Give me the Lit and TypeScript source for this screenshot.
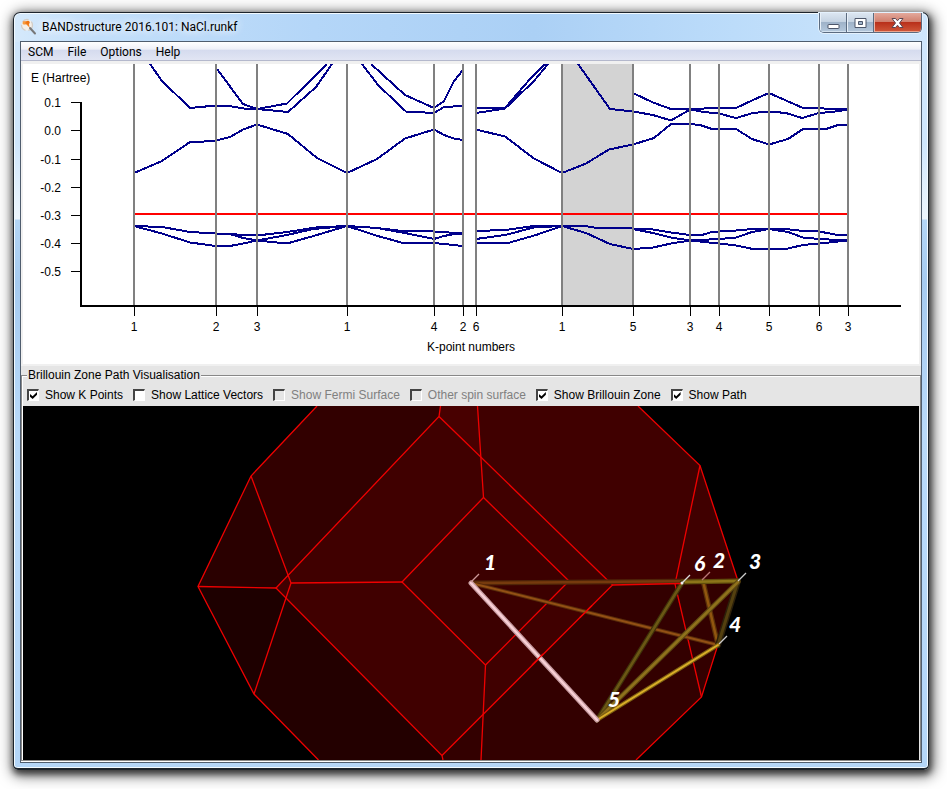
import { LitElement, html, svg, css } from "lit";
import { customElement, property, state } from "lit/decorators.js";

const K_LINES: Array<[number, string]> = [
  [134, "1"], [216, "2"], [257, "3"], [347, "1"], [434, "4"], [463, "2"], [476, "6"],
  [562, "1"], [633, "5"], [690, "3"], [719, "4"], [769, "5"], [819, "6"], [848, "3"],
];

const ENERGIES: Array<[number, string]> = [
  [102, "0.1"], [130, "0.0"], [159, "-0.1"], [187, "-0.2"], [215, "-0.3"], [243, "-0.4"], [271, "-0.5"],
];

const BANDS: string[] = [
  // conduction, first part of the path
  "150,64 162,81 190,108 216,105.5 229,106 244,108.5 257,109 287,103.5 327,64",
  "217,69 243,104 257,109 288,112 316,87 332,64",
  "362,64 378,85 406,111.5 434,113 444,107 463,106",
  "371,64 405,95 434,108 444,101 454,81 463,70",
  "134,173 162,161 190,142 204,141.5 216,140.5 230,137 243,129.5 257,124.5 288,134 317,158 347,173 377,159 405,138.5 434,129.5 444,135 454,138.5 463,140",
  // valence, first part
  "134,226 162,227 190,232 216,233.5 257,235.5 287,232 316,227.5 347,226 377,228 402,231 434,231.5 463,233.5",
  "216,233.5 230,234 243,238 257,240.5 287,235 313,229 347,226 377,228 405,233 434,239 444,236 454,234 463,233.5",
  "134,226 162,233.5 190,242.5 216,246 230,246 243,243.5 257,240.5 287,243.5 317,235 347,226 376,235.5 403,243 434,243 463,246",
  // conduction, second part
  "476,108 505,108 530,79 545,64",
  "476,113 505,108.5 534,81 548,64",
  "476,129.5 505,136.5 534,158.5 562,173 586,163.5 609,149.5 633,144.5 654,138 671,124 690,124 700,125 712,129 736,129 752,139 769,144.5 788,139 803,129 826,129 838,125 848,125",
  "578,64 610,109 633,111.5 653,115 671,120.5 690,109.5 704,112 719,113.5 736,118 753,113 769,111.5 786,113 802,118 819,113 832,112 848,109.5",
  "633,93 653,102.5 671,109 697,109 712,108 736,108 753,100 769,93 786,100.5 803,108 819,108 829,109 848,109.5",
  // valence, second part
  "476,231 505,230 534,226 562,226 585,226 597,228 633,228.5 650,229 671,232.5 690,235 702,235 712,232 736,230.5 753,229 786,229 803,231 819,231.5 838,235 848,235",
  "476,239 505,235 534,227.5 562,226",
  "633,229 653,233 671,237.5 690,240.5 719,239 736,237.5 752,232 769,229 788,232 803,237.5 819,239 848,240.5",
  "476,243 508,243 536,235 562,226 586,233 610,244 633,249 653,247.5 671,243.5 690,240.5 719,243.5 736,245.5 753,249 786,249 803,245 819,243.5 848,240.5",
];

@customElement("band-chart")
class BandChart extends LitElement {
  static styles = css`
    :host { display: block; background: #fff; }
    svg { display: block; width: 100%; height: auto; }
    text { font: 12px "Liberation Sans", Arial, sans-serif; fill: #000; }
    .end { text-anchor: end; }
    .mid { text-anchor: middle; }
    .band { fill: none; stroke: #00008b; stroke-width: 2; shape-rendering: crispEdges; }
    .crisp { shape-rendering: crispEdges; }
  `;
  render() {
    return html`<svg viewBox="23 64 896 300" role="img" aria-label="Band structure">
      <text x="31" y="82">E (Hartree)</text>
      <rect class="crisp" x="562" y="64" width="71" height="242" fill="#d3d3d3"></rect>
      ${BANDS.map((p) => svg`<polyline class="band" points=${p}></polyline>`)}
      <rect class="crisp" x="134" y="213" width="714" height="2" fill="#f00"></rect>
      ${K_LINES.map(([x, label]) => svg`
        <rect class="crisp" x=${x - 1} y="64" width="2" height="241" fill="#808080"></rect>
        <rect class="crisp" x=${x} y="307" width="1" height="9"></rect>
        <text class="mid" x=${x} y="331">${label}</text>`)}
      ${ENERGIES.map(([y, label]) => svg`
        <rect class="crisp" x="71" y=${y} width="10" height="1"></rect>
        <text class="end" x="61" y=${y + 5}>${label}</text>`)}
      <rect class="crisp" x="80" y="102" width="2" height="205"></rect>
      <rect class="crisp" x="80" y="305" width="821" height="2"></rect>
      <text class="mid" x="471" y="351">K-point numbers</text>
    </svg>`;
  }
}

const FACES: Array<[string, string]> = [
  ["317,406 251,476 291,583 439,416.5 440.5,406", "#320000"],
  ["251,476 198,586.5 276,588 291,583", "#2a0000"],
  ["198,586.5 276,588 291,583 287,597 254,694", "#1e0000"],
  ["287,597 254,694 318.5,760 443,760 442,755.5", "#230000"],
  ["440.5,406 638,406 700,465.5 738,581 612.5,585 439,416.5", "#400000"],
  ["612.5,585 738,581 701.5,697 636,760 443,760 442,755.5", "#330000"],
  ["439,416.5 612.5,585 442,755.5 276,588", "#400000"],
  ["440.5,406 477.5,406 481,458 439,416.5", "#480000"],
  ["483.5,497.5 569,581 485.5,665 402,582", "#3c0000"],
];

const EDGES: string[] = [
  "317,406 251,476 198,586.5 254,694 318.5,760",
  "251,476 291,583 254,694",
  "291,583 402,582",
  "198,586.5 276,588",
  "440.5,406 439,416.5 276,588 442,755.5 443,760",
  "439,416.5 612.5,585 442,755.5",
  "477.5,406 483.5,497.5 402,582 485.5,665 481,760",
  "483.5,497.5 569,581 485.5,665",
  "638,406 700,465.5 738,581 701.5,697 636,760",
  "700,465.5 675,584 701.5,697",
];

type Rod = [number, number, number, number, number, string, string];
const RODS: Rod[] = [
  [471, 583, 703, 581, 5, "#4f2408", "#763a0d"],
  [471, 583, 718, 645, 4, "#5a2c0a", "#935014"],
  [703, 581, 718, 645, 5, "#5a3009", "#91560f"],
  [738, 581, 718, 645, 6, "#2c200a", "#54400f"],
  [682, 582, 738, 581, 5, "#604c0c", "#8d7519"],
  [682, 583, 597, 720, 5, "#3f3009", "#6b5714"],
  [738, 582, 597, 720, 5, "#5d4710", "#8f711c"],
  [718, 645, 597, 720, 4, "#7c5f12", "#dcae28"],
  [471, 583, 597, 720, 5, "#c59ba0", "#f8cfd5"],
];

const POINTS: Array<[number, number, string]> = [
  [484, 570, "1"], [694, 571, "6"], [713, 568, "2"], [749, 569, "3"], [729, 632, "4"], [608, 707, "5"],
];

const POINTERS: Array<[number, number, string]> = [
  [471, 582, "#c99"], [682, 583, "#ddd"], [702, 580, "#b77"], [738, 581, "#ccc"], [719, 644, "#ccc"],
];

@customElement("zone-view")
class ZoneView extends LitElement {
  @property({ type: Boolean }) points = true;
  @property({ type: Boolean }) zone = true;
  @property({ type: Boolean }) path = true;
  static styles = css`
    :host { display: block; background: #000; }
    svg { display: block; width: 100%; height: auto; }
    text { font: italic 900 21px Lato, "Open Sans", sans-serif; fill: #fff; }
    .edge { fill: none; stroke: #ee0000; stroke-width: 1.3; }
    .rod { stroke-linecap: round; }
  `;
  render() {
    return html`<svg viewBox="23 406 896 354" role="img" aria-label="Brillouin zone">
      ${this.zone ? svg`
        ${FACES.map(([p, fill]) => svg`<polygon points=${p} fill=${fill}></polygon>`)}
        ${EDGES.map((p) => svg`<polyline class="edge" points=${p}></polyline>`)}` : ""}
      ${this.path ? RODS.map(([x1, y1, x2, y2, w, dark, light]) => svg`
        <line class="rod" x1=${x1} y1=${y1} x2=${x2} y2=${y2} stroke=${dark} stroke-width=${w}></line>
        <line class="rod" x1=${x1} y1=${y1} x2=${x2} y2=${y2} stroke=${light} stroke-width=${w / 2}></line>`) : ""}
      ${this.zone ? svg`
        <line class="edge" x1="612" y1="585" x2="681" y2="583.5"></line>
        <line class="edge" x1="532" y1="665" x2="543" y2="654"></line>
        <line class="edge" x1="580" y1="617.5" x2="592" y2="605.5"></line>` : ""}
      ${this.points ? svg`
        ${POINTERS.map(([x, y, c]) => svg`<line x1=${x} y1=${y} x2=${x + 8} y2=${y - 8} stroke=${c} stroke-width="1.2"></line>`)}
        <circle cx="682" cy="583" r="1.5" fill="#eee"></circle>
        ${POINTS.map(([x, y, n]) => svg`<text x=${x} y=${y}>${n}</text>`)}` : ""}
    </svg>`;
  }
}

interface Option { label: string; checked: boolean; disabled: boolean }

@customElement("app-root")
class AppRoot extends LitElement {
  @state() private options: Option[] = [
    { label: "Show K Points", checked: true, disabled: false },
    { label: "Show Lattice Vectors", checked: false, disabled: false },
    { label: "Show Fermi Surface", checked: false, disabled: true },
    { label: "Other spin surface", checked: false, disabled: true },
    { label: "Show Brillouin Zone", checked: true, disabled: false },
    { label: "Show Path", checked: true, disabled: false },
  ];

  static styles = css`
    :host { display: flow-root; background: #fff; color: #000; }
    * { box-sizing: border-box; }
    .window {
      margin: 12px 18px 19px 13px;
      padding: 0 6px 5px;
      border: 1px solid #1d242c;
      border-bottom-width: 2px;
      border-radius: 7px 7px 5px 5px;
      background:
        linear-gradient(90deg, #d5e9fb 0, #c3dffa 80px, #b4d6f8 300px, #abd0f5 520px, #bcdcfa 720px, #cfe6fc 100%) top / 100% 29px no-repeat,
        linear-gradient(#cfe6fc 0, #cfe6fc 130px, #eef6fd 206px, #b4d6f6 207px, #a6cbf0 270px, #b9dafa 420px, #b4d6f8 100%);
      box-shadow: inset 0 0 0 1px #f2faff, 1px 3px 6px 1px rgba(0, 0, 0, .6), 2px 3px 14px 3px rgba(0, 0, 0, .55);
    }
    .titlebar { display: flex; height: 28px; align-items: center; }
    .logo { width: 18px; height: 18px; }
    .title {
      margin: 0 0 0 4px;
      flex: 1;
      font: 12px/18px Roboto, sans-serif;
      text-shadow: 0 0 8px #fff, 0 0 8px #fff;
      white-space: nowrap;
    }
    .controls { display: flex; align-self: flex-start; height: 20px; border: 1px solid #5b6b80; border-top: 0; border-radius: 0 0 5px 5px; overflow: hidden; box-shadow: 0 0 0 1px #e4f1fd; }
    .control {
      display: flex; align-items: center; justify-content: center;
      width: 27px; padding: 0; border: 0; border-right: 1px solid #5b6b80;
      background: linear-gradient(#dce6f1 0, #c5d3e2 45%, #9fb3c9 50%, #b4c8dc 100%);
      box-shadow: inset 1px 0 #e8f0f8, inset 0 -1px #d5e3f0;
    }
    .close {
      width: 47px; border-right: 0;
      background: linear-gradient(#e3a99c 0, #d0806f 45%, #b9301b 50%, #d0583a 100%);
      box-shadow: inset 1px 0 #eab5a8, inset 0 -1px #eba48d;
    }
    .client { padding-bottom: 1px; border: 1px solid #4f5d6e; background: #e5e5e5; }
    .menubar {
      display: flex; height: 19px;
      border-bottom: 1px solid #b4b8cc;
      background: linear-gradient(#fff 0, #eef0f8 40%, #d5dbee 45%, #e1e5f3 100%);
    }
    .menu {
      padding: 1px 7px 0; border: 0; background: none; color: #000;
      font: 12px/18px Roboto, sans-serif;
    }
    .chart { padding: 3px 2px 2px; background: #f0f0f0; }
    .panel {
      min-width: 0; margin: 0; padding: 0 1px;
      border: 1px solid #888;
      box-shadow: inset 1px 1px #fff, 0 1px #fff;
    }
    .legend, .option { font: 12px/18px "Liberation Sans", Arial, sans-serif; }
    .legend { margin-left: 4px; padding: 0 1px; background: #e5e5e5; }
    .options { display: flex; flex-wrap: wrap; gap: 0 10px; min-height: 22px; align-items: center; padding-left: 4px; }
    .option { display: flex; gap: 6px; align-items: center; white-space: nowrap; }
    .option.off { color: #808080; }
    .box {
      appearance: none; display: grid; place-items: center;
      width: 12px; height: 12px; margin: 0;
      background: #fff; border: 2px solid; border-color: #444 #fff #fff #444;
      border-right-width: 1px; border-bottom-width: 1px;
    }
    .box:disabled { background: #e5e5e5; }
    .box:checked::after {
      content: ""; width: 7px; height: 7px; background: #000;
      clip-path: polygon(0 28%, 38% 62%, 100% 0, 100% 40%, 38% 100%, 0 68%);
    }
  `;

  private toggle(i: number, e: Event) {
    const checked = (e.target as HTMLInputElement).checked;
    this.options = this.options.map((o, n) => (n === i ? { ...o, checked } : o));
  }

  render() {
    const o = this.options;
    return html`
      <main class="window">
        <header class="titlebar">
          <svg class="logo" viewBox="0 0 18 18" aria-hidden="true">
            <circle cx="7" cy="7" r="5.5" fill="#f4efe8" stroke="#d3cdc6" stroke-width="1.3" stroke-dasharray="7 3"></circle>
            <path d="M10 10 15 15.5" stroke="#777" stroke-width="2" stroke-linecap="round"></path>
            <path d="M3 3.500 8.500 3 9.500 9.500 6.500 6.500 3 6Z" fill="#f5821f"></path>
            <circle cx="4" cy="5" r="1.500" fill="#f79a3b"></circle>
            <circle cx="8" cy="4.500" r="1.700" fill="#ee7412"></circle>
          </svg>
          <h1 class="title">BANDstructure 2016.101: NaCl.runkf</h1>
          <div class="controls">
            <button class="control" aria-label="Minimize">
              <svg width="13" height="14" viewBox="0 0 13 14"><rect x="1" y="8.500" width="11" height="4" rx=".5" fill="#fff" stroke="#4c566a"></rect></svg>
            </button>
            <button class="control" aria-label="Maximize">
              <svg width="13" height="12" viewBox="0 0 13 12"><path d="M1 1.500H12V10.500H1ZM4.500 4.500V7.500H8.500V4.500Z" fill="#fff" fill-rule="evenodd" stroke="#4c566a"></path></svg>
            </button>
            <button class="control close" aria-label="Close">
              <svg width="13" height="12" viewBox="0 0 13 12"><path d="M1 1.500H4.500L6.500 3.800 8.500 1.500H12L8.500 6 12 10.500H8.500L6.500 8.200 4.500 10.500H1L4.500 6Z" fill="#fff" stroke="#5a4450"></path></svg>
            </button>
          </div>
        </header>
        <div class="client">
          <nav class="menubar">
            ${["SCM", "File", "Options", "Help"].map((m) => html`<button class="menu">${m}</button>`)}
          </nav>
          <section class="chart"><band-chart></band-chart></section>
          <fieldset class="panel">
            <legend class="legend">Brillouin Zone Path Visualisation</legend>
            <div class="options">
              ${o.map((opt, i) => html`
                <label class="option ${opt.disabled ? "off" : ""}">
                  <input class="box" type="checkbox" .checked=${opt.checked} ?disabled=${opt.disabled}
                    @change=${(e: Event) => this.toggle(i, e)} />${opt.label}
                </label>`)}
            </div>
            <zone-view .points=${o[0].checked} .zone=${o[4].checked} .path=${o[5].checked}></zone-view>
          </fieldset>
        </div>
      </main>`;
  }
}
